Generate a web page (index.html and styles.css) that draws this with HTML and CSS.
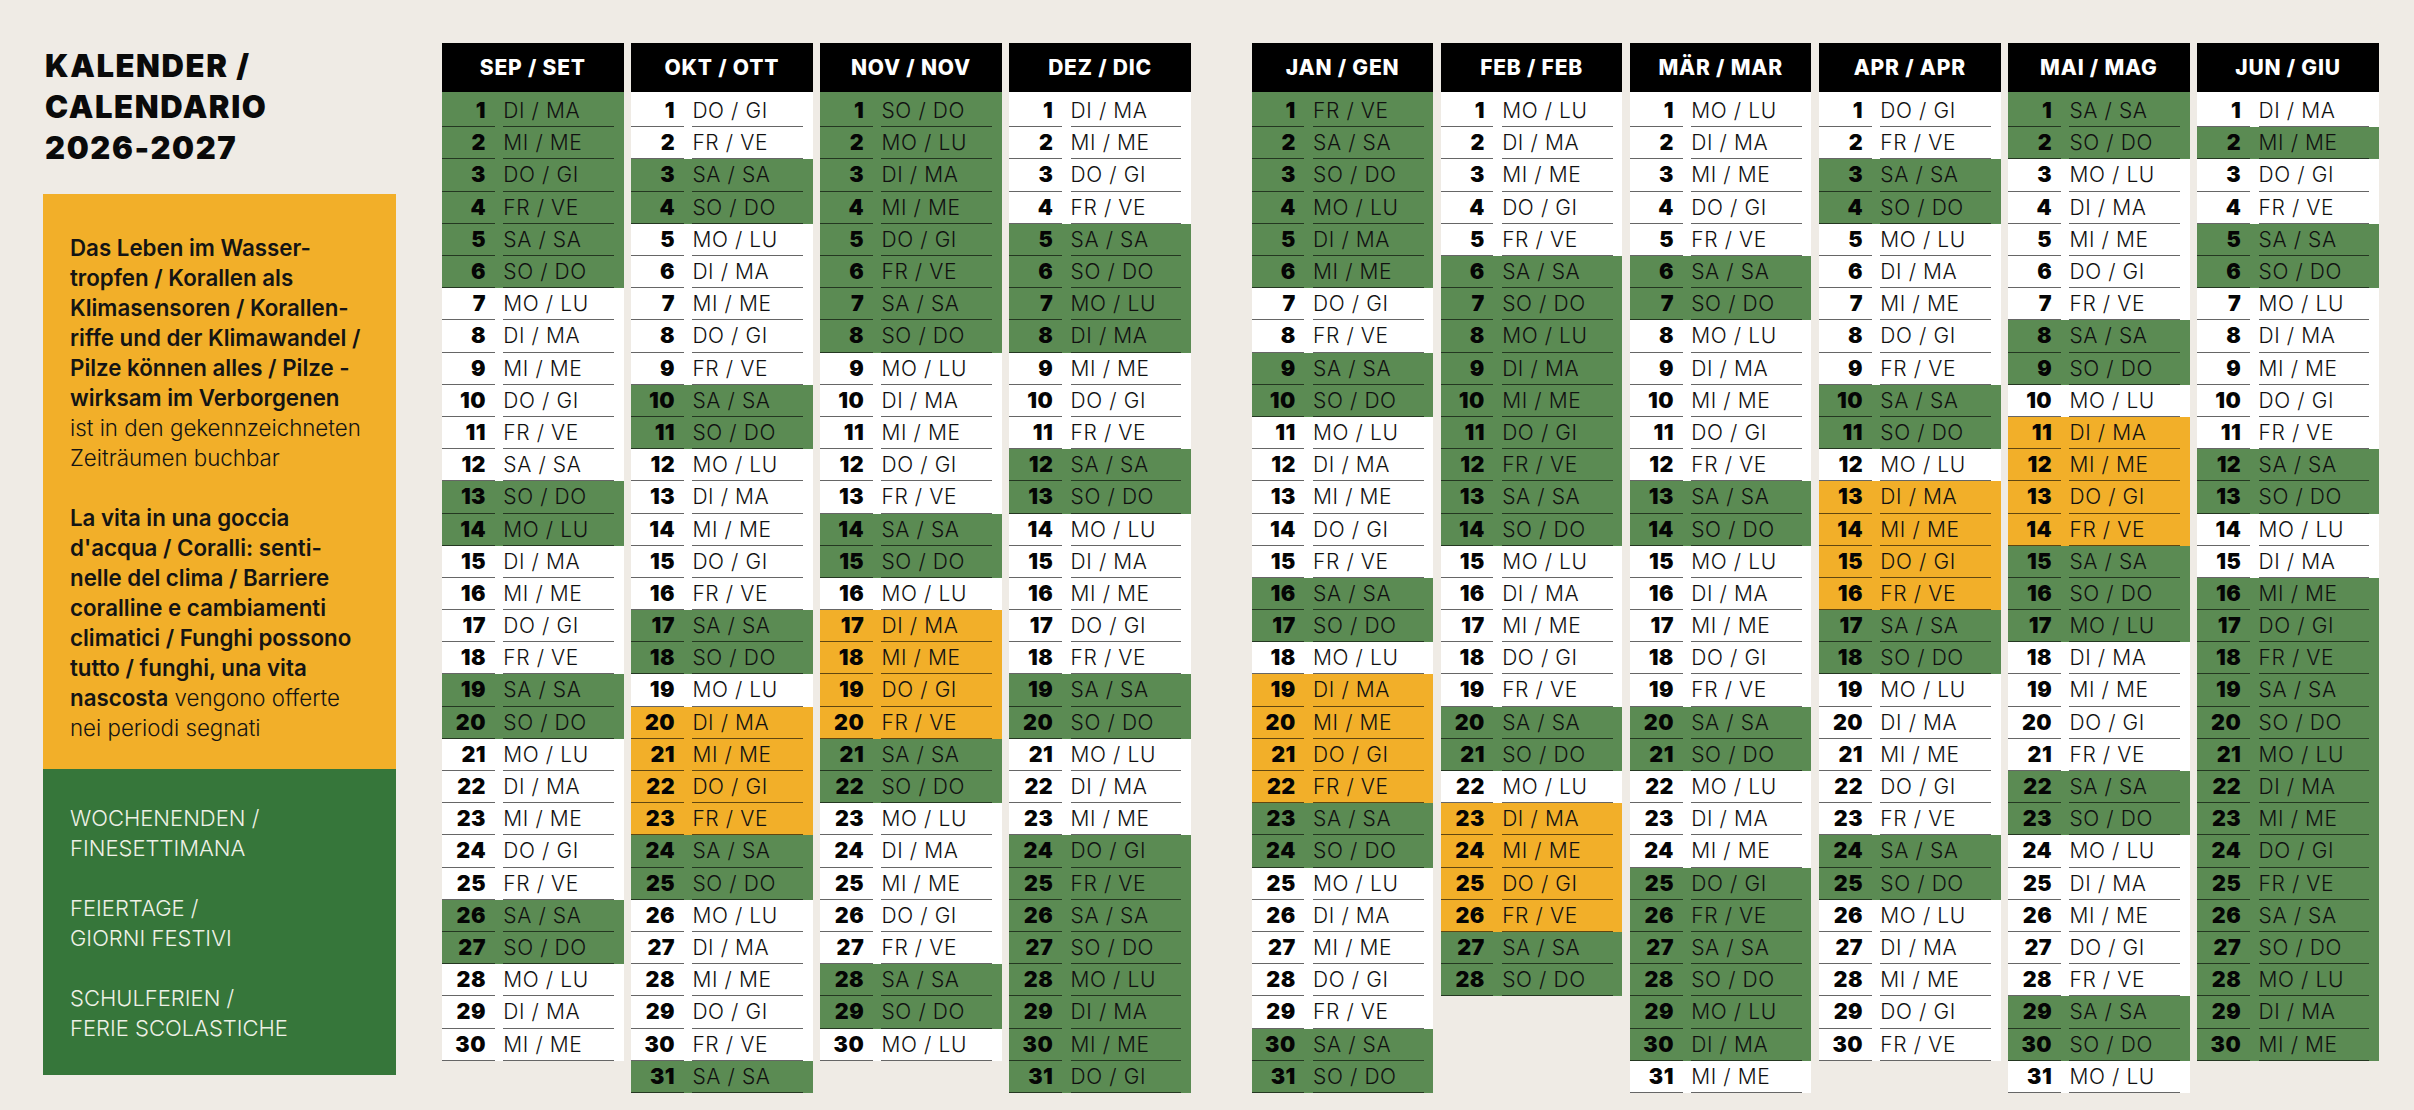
FILE: index.html
```html
<!DOCTYPE html>
<html lang="de">
<head>
<meta charset="utf-8">
<title>Kalender / Calendario 2026-2027</title>
<link rel="stylesheet" href="styles.css">
</head>
<body>
<div class="page">
  <aside class="side">
    <h1 class="title">KALENDER /<br>CALENDARIO<br>2026-2027</h1>
    <div class="info">
      <p><strong>Das Leben im Wasser-<br>tropfen / Korallen als<br>Klimasensoren / Korallen-<br>riffe und der Klimawandel /<br>Pilze können alles / Pilze -<br>wirksam im Verborgenen</strong><br>ist in den gekennzeichneten<br>Zeiträumen buchbar</p>
      <p><strong>La vita in una goccia<br>d'acqua / Coralli: senti-<br>nelle del clima / Barriere<br>coralline e cambiamenti<br>climatici / Funghi possono<br>tutto / funghi, una vita<br>nascosta</strong> vengono offerte<br>nei periodi segnati</p>
    </div>
    <div class="legend">
      <p>WOCHENENDEN /<br>FINESETTIMANA</p>
      <p>FEIERTAGE /<br>GIORNI FESTIVI</p>
      <p>SCHULFERIEN /<br>FERIE SCOLASTICHE</p>
    </div>
  </aside>

  <main class="cal">
    <div class="grp">
      <section class="month">
        <h2>SEP / SET</h2>
        <ul>
          <li class="g"><span class="n">1</span><span class="t">DI / MA</span></li>
          <li class="g"><span class="n">2</span><span class="t">MI / ME</span></li>
          <li class="g"><span class="n">3</span><span class="t">DO / GI</span></li>
          <li class="g"><span class="n">4</span><span class="t">FR / VE</span></li>
          <li class="g"><span class="n">5</span><span class="t">SA / SA</span></li>
          <li class="g"><span class="n">6</span><span class="t">SO / DO</span></li>
          <li><span class="n">7</span><span class="t">MO / LU</span></li>
          <li><span class="n">8</span><span class="t">DI / MA</span></li>
          <li><span class="n">9</span><span class="t">MI / ME</span></li>
          <li><span class="n">10</span><span class="t">DO / GI</span></li>
          <li><span class="n">11</span><span class="t">FR / VE</span></li>
          <li><span class="n">12</span><span class="t">SA / SA</span></li>
          <li class="g"><span class="n">13</span><span class="t">SO / DO</span></li>
          <li class="g"><span class="n">14</span><span class="t">MO / LU</span></li>
          <li><span class="n">15</span><span class="t">DI / MA</span></li>
          <li><span class="n">16</span><span class="t">MI / ME</span></li>
          <li><span class="n">17</span><span class="t">DO / GI</span></li>
          <li><span class="n">18</span><span class="t">FR / VE</span></li>
          <li class="g"><span class="n">19</span><span class="t">SA / SA</span></li>
          <li class="g"><span class="n">20</span><span class="t">SO / DO</span></li>
          <li><span class="n">21</span><span class="t">MO / LU</span></li>
          <li><span class="n">22</span><span class="t">DI / MA</span></li>
          <li><span class="n">23</span><span class="t">MI / ME</span></li>
          <li><span class="n">24</span><span class="t">DO / GI</span></li>
          <li><span class="n">25</span><span class="t">FR / VE</span></li>
          <li class="g"><span class="n">26</span><span class="t">SA / SA</span></li>
          <li class="g"><span class="n">27</span><span class="t">SO / DO</span></li>
          <li><span class="n">28</span><span class="t">MO / LU</span></li>
          <li><span class="n">29</span><span class="t">DI / MA</span></li>
          <li><span class="n">30</span><span class="t">MI / ME</span></li>
        </ul>
      </section>

      <section class="month">
        <h2>OKT / OTT</h2>
        <ul>
          <li><span class="n">1</span><span class="t">DO / GI</span></li>
          <li><span class="n">2</span><span class="t">FR / VE</span></li>
          <li class="g"><span class="n">3</span><span class="t">SA / SA</span></li>
          <li class="g"><span class="n">4</span><span class="t">SO / DO</span></li>
          <li><span class="n">5</span><span class="t">MO / LU</span></li>
          <li><span class="n">6</span><span class="t">DI / MA</span></li>
          <li><span class="n">7</span><span class="t">MI / ME</span></li>
          <li><span class="n">8</span><span class="t">DO / GI</span></li>
          <li><span class="n">9</span><span class="t">FR / VE</span></li>
          <li class="g"><span class="n">10</span><span class="t">SA / SA</span></li>
          <li class="g"><span class="n">11</span><span class="t">SO / DO</span></li>
          <li><span class="n">12</span><span class="t">MO / LU</span></li>
          <li><span class="n">13</span><span class="t">DI / MA</span></li>
          <li><span class="n">14</span><span class="t">MI / ME</span></li>
          <li><span class="n">15</span><span class="t">DO / GI</span></li>
          <li><span class="n">16</span><span class="t">FR / VE</span></li>
          <li class="g"><span class="n">17</span><span class="t">SA / SA</span></li>
          <li class="g"><span class="n">18</span><span class="t">SO / DO</span></li>
          <li><span class="n">19</span><span class="t">MO / LU</span></li>
          <li class="o"><span class="n">20</span><span class="t">DI / MA</span></li>
          <li class="o"><span class="n">21</span><span class="t">MI / ME</span></li>
          <li class="o"><span class="n">22</span><span class="t">DO / GI</span></li>
          <li class="o"><span class="n">23</span><span class="t">FR / VE</span></li>
          <li class="g"><span class="n">24</span><span class="t">SA / SA</span></li>
          <li class="g"><span class="n">25</span><span class="t">SO / DO</span></li>
          <li><span class="n">26</span><span class="t">MO / LU</span></li>
          <li><span class="n">27</span><span class="t">DI / MA</span></li>
          <li><span class="n">28</span><span class="t">MI / ME</span></li>
          <li><span class="n">29</span><span class="t">DO / GI</span></li>
          <li><span class="n">30</span><span class="t">FR / VE</span></li>
          <li class="g"><span class="n">31</span><span class="t">SA / SA</span></li>
        </ul>
      </section>

      <section class="month">
        <h2>NOV / NOV</h2>
        <ul>
          <li class="g"><span class="n">1</span><span class="t">SO / DO</span></li>
          <li class="g"><span class="n">2</span><span class="t">MO / LU</span></li>
          <li class="g"><span class="n">3</span><span class="t">DI / MA</span></li>
          <li class="g"><span class="n">4</span><span class="t">MI / ME</span></li>
          <li class="g"><span class="n">5</span><span class="t">DO / GI</span></li>
          <li class="g"><span class="n">6</span><span class="t">FR / VE</span></li>
          <li class="g"><span class="n">7</span><span class="t">SA / SA</span></li>
          <li class="g"><span class="n">8</span><span class="t">SO / DO</span></li>
          <li><span class="n">9</span><span class="t">MO / LU</span></li>
          <li><span class="n">10</span><span class="t">DI / MA</span></li>
          <li><span class="n">11</span><span class="t">MI / ME</span></li>
          <li><span class="n">12</span><span class="t">DO / GI</span></li>
          <li><span class="n">13</span><span class="t">FR / VE</span></li>
          <li class="g"><span class="n">14</span><span class="t">SA / SA</span></li>
          <li class="g"><span class="n">15</span><span class="t">SO / DO</span></li>
          <li><span class="n">16</span><span class="t">MO / LU</span></li>
          <li class="o"><span class="n">17</span><span class="t">DI / MA</span></li>
          <li class="o"><span class="n">18</span><span class="t">MI / ME</span></li>
          <li class="o"><span class="n">19</span><span class="t">DO / GI</span></li>
          <li class="o"><span class="n">20</span><span class="t">FR / VE</span></li>
          <li class="g"><span class="n">21</span><span class="t">SA / SA</span></li>
          <li class="g"><span class="n">22</span><span class="t">SO / DO</span></li>
          <li><span class="n">23</span><span class="t">MO / LU</span></li>
          <li><span class="n">24</span><span class="t">DI / MA</span></li>
          <li><span class="n">25</span><span class="t">MI / ME</span></li>
          <li><span class="n">26</span><span class="t">DO / GI</span></li>
          <li><span class="n">27</span><span class="t">FR / VE</span></li>
          <li class="g"><span class="n">28</span><span class="t">SA / SA</span></li>
          <li class="g"><span class="n">29</span><span class="t">SO / DO</span></li>
          <li><span class="n">30</span><span class="t">MO / LU</span></li>
        </ul>
      </section>

      <section class="month">
        <h2>DEZ / DIC</h2>
        <ul>
          <li><span class="n">1</span><span class="t">DI / MA</span></li>
          <li><span class="n">2</span><span class="t">MI / ME</span></li>
          <li><span class="n">3</span><span class="t">DO / GI</span></li>
          <li><span class="n">4</span><span class="t">FR / VE</span></li>
          <li class="g"><span class="n">5</span><span class="t">SA / SA</span></li>
          <li class="g"><span class="n">6</span><span class="t">SO / DO</span></li>
          <li class="g"><span class="n">7</span><span class="t">MO / LU</span></li>
          <li class="g"><span class="n">8</span><span class="t">DI / MA</span></li>
          <li><span class="n">9</span><span class="t">MI / ME</span></li>
          <li><span class="n">10</span><span class="t">DO / GI</span></li>
          <li><span class="n">11</span><span class="t">FR / VE</span></li>
          <li class="g"><span class="n">12</span><span class="t">SA / SA</span></li>
          <li class="g"><span class="n">13</span><span class="t">SO / DO</span></li>
          <li><span class="n">14</span><span class="t">MO / LU</span></li>
          <li><span class="n">15</span><span class="t">DI / MA</span></li>
          <li><span class="n">16</span><span class="t">MI / ME</span></li>
          <li><span class="n">17</span><span class="t">DO / GI</span></li>
          <li><span class="n">18</span><span class="t">FR / VE</span></li>
          <li class="g"><span class="n">19</span><span class="t">SA / SA</span></li>
          <li class="g"><span class="n">20</span><span class="t">SO / DO</span></li>
          <li><span class="n">21</span><span class="t">MO / LU</span></li>
          <li><span class="n">22</span><span class="t">DI / MA</span></li>
          <li><span class="n">23</span><span class="t">MI / ME</span></li>
          <li class="g"><span class="n">24</span><span class="t">DO / GI</span></li>
          <li class="g"><span class="n">25</span><span class="t">FR / VE</span></li>
          <li class="g"><span class="n">26</span><span class="t">SA / SA</span></li>
          <li class="g"><span class="n">27</span><span class="t">SO / DO</span></li>
          <li class="g"><span class="n">28</span><span class="t">MO / LU</span></li>
          <li class="g"><span class="n">29</span><span class="t">DI / MA</span></li>
          <li class="g"><span class="n">30</span><span class="t">MI / ME</span></li>
          <li class="g"><span class="n">31</span><span class="t">DO / GI</span></li>
        </ul>
      </section>
    </div>

    <div class="grp">
      <section class="month">
        <h2>JAN / GEN</h2>
        <ul>
          <li class="g"><span class="n">1</span><span class="t">FR / VE</span></li>
          <li class="g"><span class="n">2</span><span class="t">SA / SA</span></li>
          <li class="g"><span class="n">3</span><span class="t">SO / DO</span></li>
          <li class="g"><span class="n">4</span><span class="t">MO / LU</span></li>
          <li class="g"><span class="n">5</span><span class="t">DI / MA</span></li>
          <li class="g"><span class="n">6</span><span class="t">MI / ME</span></li>
          <li><span class="n">7</span><span class="t">DO / GI</span></li>
          <li><span class="n">8</span><span class="t">FR / VE</span></li>
          <li class="g"><span class="n">9</span><span class="t">SA / SA</span></li>
          <li class="g"><span class="n">10</span><span class="t">SO / DO</span></li>
          <li><span class="n">11</span><span class="t">MO / LU</span></li>
          <li><span class="n">12</span><span class="t">DI / MA</span></li>
          <li><span class="n">13</span><span class="t">MI / ME</span></li>
          <li><span class="n">14</span><span class="t">DO / GI</span></li>
          <li><span class="n">15</span><span class="t">FR / VE</span></li>
          <li class="g"><span class="n">16</span><span class="t">SA / SA</span></li>
          <li class="g"><span class="n">17</span><span class="t">SO / DO</span></li>
          <li><span class="n">18</span><span class="t">MO / LU</span></li>
          <li class="o"><span class="n">19</span><span class="t">DI / MA</span></li>
          <li class="o"><span class="n">20</span><span class="t">MI / ME</span></li>
          <li class="o"><span class="n">21</span><span class="t">DO / GI</span></li>
          <li class="o"><span class="n">22</span><span class="t">FR / VE</span></li>
          <li class="g"><span class="n">23</span><span class="t">SA / SA</span></li>
          <li class="g"><span class="n">24</span><span class="t">SO / DO</span></li>
          <li><span class="n">25</span><span class="t">MO / LU</span></li>
          <li><span class="n">26</span><span class="t">DI / MA</span></li>
          <li><span class="n">27</span><span class="t">MI / ME</span></li>
          <li><span class="n">28</span><span class="t">DO / GI</span></li>
          <li><span class="n">29</span><span class="t">FR / VE</span></li>
          <li class="g"><span class="n">30</span><span class="t">SA / SA</span></li>
          <li class="g"><span class="n">31</span><span class="t">SO / DO</span></li>
        </ul>
      </section>

      <section class="month">
        <h2>FEB / FEB</h2>
        <ul>
          <li><span class="n">1</span><span class="t">MO / LU</span></li>
          <li><span class="n">2</span><span class="t">DI / MA</span></li>
          <li><span class="n">3</span><span class="t">MI / ME</span></li>
          <li><span class="n">4</span><span class="t">DO / GI</span></li>
          <li><span class="n">5</span><span class="t">FR / VE</span></li>
          <li class="g"><span class="n">6</span><span class="t">SA / SA</span></li>
          <li class="g"><span class="n">7</span><span class="t">SO / DO</span></li>
          <li class="g"><span class="n">8</span><span class="t">MO / LU</span></li>
          <li class="g"><span class="n">9</span><span class="t">DI / MA</span></li>
          <li class="g"><span class="n">10</span><span class="t">MI / ME</span></li>
          <li class="g"><span class="n">11</span><span class="t">DO / GI</span></li>
          <li class="g"><span class="n">12</span><span class="t">FR / VE</span></li>
          <li class="g"><span class="n">13</span><span class="t">SA / SA</span></li>
          <li class="g"><span class="n">14</span><span class="t">SO / DO</span></li>
          <li><span class="n">15</span><span class="t">MO / LU</span></li>
          <li><span class="n">16</span><span class="t">DI / MA</span></li>
          <li><span class="n">17</span><span class="t">MI / ME</span></li>
          <li><span class="n">18</span><span class="t">DO / GI</span></li>
          <li><span class="n">19</span><span class="t">FR / VE</span></li>
          <li class="g"><span class="n">20</span><span class="t">SA / SA</span></li>
          <li class="g"><span class="n">21</span><span class="t">SO / DO</span></li>
          <li><span class="n">22</span><span class="t">MO / LU</span></li>
          <li class="o"><span class="n">23</span><span class="t">DI / MA</span></li>
          <li class="o"><span class="n">24</span><span class="t">MI / ME</span></li>
          <li class="o"><span class="n">25</span><span class="t">DO / GI</span></li>
          <li class="o"><span class="n">26</span><span class="t">FR / VE</span></li>
          <li class="g"><span class="n">27</span><span class="t">SA / SA</span></li>
          <li class="g"><span class="n">28</span><span class="t">SO / DO</span></li>
        </ul>
      </section>

      <section class="month">
        <h2>MÄR / MAR</h2>
        <ul>
          <li><span class="n">1</span><span class="t">MO / LU</span></li>
          <li><span class="n">2</span><span class="t">DI / MA</span></li>
          <li><span class="n">3</span><span class="t">MI / ME</span></li>
          <li><span class="n">4</span><span class="t">DO / GI</span></li>
          <li><span class="n">5</span><span class="t">FR / VE</span></li>
          <li class="g"><span class="n">6</span><span class="t">SA / SA</span></li>
          <li class="g"><span class="n">7</span><span class="t">SO / DO</span></li>
          <li><span class="n">8</span><span class="t">MO / LU</span></li>
          <li><span class="n">9</span><span class="t">DI / MA</span></li>
          <li><span class="n">10</span><span class="t">MI / ME</span></li>
          <li><span class="n">11</span><span class="t">DO / GI</span></li>
          <li><span class="n">12</span><span class="t">FR / VE</span></li>
          <li class="g"><span class="n">13</span><span class="t">SA / SA</span></li>
          <li class="g"><span class="n">14</span><span class="t">SO / DO</span></li>
          <li><span class="n">15</span><span class="t">MO / LU</span></li>
          <li><span class="n">16</span><span class="t">DI / MA</span></li>
          <li><span class="n">17</span><span class="t">MI / ME</span></li>
          <li><span class="n">18</span><span class="t">DO / GI</span></li>
          <li><span class="n">19</span><span class="t">FR / VE</span></li>
          <li class="g"><span class="n">20</span><span class="t">SA / SA</span></li>
          <li class="g"><span class="n">21</span><span class="t">SO / DO</span></li>
          <li><span class="n">22</span><span class="t">MO / LU</span></li>
          <li><span class="n">23</span><span class="t">DI / MA</span></li>
          <li><span class="n">24</span><span class="t">MI / ME</span></li>
          <li class="g"><span class="n">25</span><span class="t">DO / GI</span></li>
          <li class="g"><span class="n">26</span><span class="t">FR / VE</span></li>
          <li class="g"><span class="n">27</span><span class="t">SA / SA</span></li>
          <li class="g"><span class="n">28</span><span class="t">SO / DO</span></li>
          <li class="g"><span class="n">29</span><span class="t">MO / LU</span></li>
          <li class="g"><span class="n">30</span><span class="t">DI / MA</span></li>
          <li><span class="n">31</span><span class="t">MI / ME</span></li>
        </ul>
      </section>

      <section class="month">
        <h2>APR / APR</h2>
        <ul>
          <li><span class="n">1</span><span class="t">DO / GI</span></li>
          <li><span class="n">2</span><span class="t">FR / VE</span></li>
          <li class="g"><span class="n">3</span><span class="t">SA / SA</span></li>
          <li class="g"><span class="n">4</span><span class="t">SO / DO</span></li>
          <li><span class="n">5</span><span class="t">MO / LU</span></li>
          <li><span class="n">6</span><span class="t">DI / MA</span></li>
          <li><span class="n">7</span><span class="t">MI / ME</span></li>
          <li><span class="n">8</span><span class="t">DO / GI</span></li>
          <li><span class="n">9</span><span class="t">FR / VE</span></li>
          <li class="g"><span class="n">10</span><span class="t">SA / SA</span></li>
          <li class="g"><span class="n">11</span><span class="t">SO / DO</span></li>
          <li><span class="n">12</span><span class="t">MO / LU</span></li>
          <li class="o"><span class="n">13</span><span class="t">DI / MA</span></li>
          <li class="o"><span class="n">14</span><span class="t">MI / ME</span></li>
          <li class="o"><span class="n">15</span><span class="t">DO / GI</span></li>
          <li class="o"><span class="n">16</span><span class="t">FR / VE</span></li>
          <li class="g"><span class="n">17</span><span class="t">SA / SA</span></li>
          <li class="g"><span class="n">18</span><span class="t">SO / DO</span></li>
          <li><span class="n">19</span><span class="t">MO / LU</span></li>
          <li><span class="n">20</span><span class="t">DI / MA</span></li>
          <li><span class="n">21</span><span class="t">MI / ME</span></li>
          <li><span class="n">22</span><span class="t">DO / GI</span></li>
          <li><span class="n">23</span><span class="t">FR / VE</span></li>
          <li class="g"><span class="n">24</span><span class="t">SA / SA</span></li>
          <li class="g"><span class="n">25</span><span class="t">SO / DO</span></li>
          <li><span class="n">26</span><span class="t">MO / LU</span></li>
          <li><span class="n">27</span><span class="t">DI / MA</span></li>
          <li><span class="n">28</span><span class="t">MI / ME</span></li>
          <li><span class="n">29</span><span class="t">DO / GI</span></li>
          <li><span class="n">30</span><span class="t">FR / VE</span></li>
        </ul>
      </section>

      <section class="month">
        <h2>MAI / MAG</h2>
        <ul>
          <li class="g"><span class="n">1</span><span class="t">SA / SA</span></li>
          <li class="g"><span class="n">2</span><span class="t">SO / DO</span></li>
          <li><span class="n">3</span><span class="t">MO / LU</span></li>
          <li><span class="n">4</span><span class="t">DI / MA</span></li>
          <li><span class="n">5</span><span class="t">MI / ME</span></li>
          <li><span class="n">6</span><span class="t">DO / GI</span></li>
          <li><span class="n">7</span><span class="t">FR / VE</span></li>
          <li class="g"><span class="n">8</span><span class="t">SA / SA</span></li>
          <li class="g"><span class="n">9</span><span class="t">SO / DO</span></li>
          <li><span class="n">10</span><span class="t">MO / LU</span></li>
          <li class="o"><span class="n">11</span><span class="t">DI / MA</span></li>
          <li class="o"><span class="n">12</span><span class="t">MI / ME</span></li>
          <li class="o"><span class="n">13</span><span class="t">DO / GI</span></li>
          <li class="o"><span class="n">14</span><span class="t">FR / VE</span></li>
          <li class="g"><span class="n">15</span><span class="t">SA / SA</span></li>
          <li class="g"><span class="n">16</span><span class="t">SO / DO</span></li>
          <li class="g"><span class="n">17</span><span class="t">MO / LU</span></li>
          <li><span class="n">18</span><span class="t">DI / MA</span></li>
          <li><span class="n">19</span><span class="t">MI / ME</span></li>
          <li><span class="n">20</span><span class="t">DO / GI</span></li>
          <li><span class="n">21</span><span class="t">FR / VE</span></li>
          <li class="g"><span class="n">22</span><span class="t">SA / SA</span></li>
          <li class="g"><span class="n">23</span><span class="t">SO / DO</span></li>
          <li><span class="n">24</span><span class="t">MO / LU</span></li>
          <li><span class="n">25</span><span class="t">DI / MA</span></li>
          <li><span class="n">26</span><span class="t">MI / ME</span></li>
          <li><span class="n">27</span><span class="t">DO / GI</span></li>
          <li><span class="n">28</span><span class="t">FR / VE</span></li>
          <li class="g"><span class="n">29</span><span class="t">SA / SA</span></li>
          <li class="g"><span class="n">30</span><span class="t">SO / DO</span></li>
          <li><span class="n">31</span><span class="t">MO / LU</span></li>
        </ul>
      </section>

      <section class="month">
        <h2>JUN / GIU</h2>
        <ul>
          <li><span class="n">1</span><span class="t">DI / MA</span></li>
          <li class="g"><span class="n">2</span><span class="t">MI / ME</span></li>
          <li><span class="n">3</span><span class="t">DO / GI</span></li>
          <li><span class="n">4</span><span class="t">FR / VE</span></li>
          <li class="g"><span class="n">5</span><span class="t">SA / SA</span></li>
          <li class="g"><span class="n">6</span><span class="t">SO / DO</span></li>
          <li><span class="n">7</span><span class="t">MO / LU</span></li>
          <li><span class="n">8</span><span class="t">DI / MA</span></li>
          <li><span class="n">9</span><span class="t">MI / ME</span></li>
          <li><span class="n">10</span><span class="t">DO / GI</span></li>
          <li><span class="n">11</span><span class="t">FR / VE</span></li>
          <li class="g"><span class="n">12</span><span class="t">SA / SA</span></li>
          <li class="g"><span class="n">13</span><span class="t">SO / DO</span></li>
          <li><span class="n">14</span><span class="t">MO / LU</span></li>
          <li><span class="n">15</span><span class="t">DI / MA</span></li>
          <li class="g"><span class="n">16</span><span class="t">MI / ME</span></li>
          <li class="g"><span class="n">17</span><span class="t">DO / GI</span></li>
          <li class="g"><span class="n">18</span><span class="t">FR / VE</span></li>
          <li class="g"><span class="n">19</span><span class="t">SA / SA</span></li>
          <li class="g"><span class="n">20</span><span class="t">SO / DO</span></li>
          <li class="g"><span class="n">21</span><span class="t">MO / LU</span></li>
          <li class="g"><span class="n">22</span><span class="t">DI / MA</span></li>
          <li class="g"><span class="n">23</span><span class="t">MI / ME</span></li>
          <li class="g"><span class="n">24</span><span class="t">DO / GI</span></li>
          <li class="g"><span class="n">25</span><span class="t">FR / VE</span></li>
          <li class="g"><span class="n">26</span><span class="t">SA / SA</span></li>
          <li class="g"><span class="n">27</span><span class="t">SO / DO</span></li>
          <li class="g"><span class="n">28</span><span class="t">MO / LU</span></li>
          <li class="g"><span class="n">29</span><span class="t">DI / MA</span></li>
          <li class="g"><span class="n">30</span><span class="t">MI / ME</span></li>
        </ul>
      </section>
    </div>
  </main>
</div>
</body>
</html>
```

FILE: styles.css
```css
* {
  box-sizing: border-box;
  margin: 0;
  padding: 0;
}

html,
body {
  background: #efebe5;
}

body {
  width: 2414px;
  height: 1110px;
  overflow: hidden;
  font-family: Inter, "Liberation Sans", sans-serif;
  color: #111;
}

.page {
  display: flex;
  align-items: flex-start;
  padding: 43px 0 0 43px;
}

/* ---------- sidebar ---------- */

.side {
  flex: none;
  width: 353px;
  margin-right: 46px;
}

.title {
  height: 151px;
  padding: 2px 0 0 2px;
  font-size: 31px;
  line-height: 41px;
  font-weight: 900;
  letter-spacing: 1.6px;
  color: #0a0a0a;
}

.info {
  background: #f2af29;
  padding: 39px 8px 26px 27px;
  font-size: 22.3px;
  line-height: 30px;
  font-weight: 300;
  color: #141414;
  white-space: nowrap;
}

.info strong {
  font-weight: 600;
}

.info p + p {
  margin-top: 30px;
}

.legend {
  background: #36763a;
  color: #eef1e6;
  padding: 34px 8px 32px 27px;
  font-size: 22px;
  line-height: 30px;
  font-weight: 300;
  white-space: nowrap;
}

.legend p + p {
  margin-top: 30px;
}

/* ---------- calendar ---------- */

.cal {
  display: flex;
  gap: 61px;
}

.grp {
  display: flex;
  gap: 7.6px;
}

.month {
  width: 181.5px;
}

.month h2 {
  height: 49px;
  background: #000;
  color: #fff;
  text-align: center;
  font-size: 21px;
  line-height: 49px;
  font-weight: 800;
  letter-spacing: 0.8px;
}

.month ul {
  list-style: none;
}

.month li {
  display: flex;
  height: 32.2px;
  background: #fff;
}

.month li:first-child {
  height: 35.3px;
  padding-top: 3.1px;
}

.month li.g {
  background: #5b8b53;
}

.month li.o {
  background: #f2af29;
}

.n {
  flex: none;
  width: 52.6px;
  margin-right: 8.7px;
  padding-right: 8.6px;
  text-align: right;
  font-size: 21.5px;
  line-height: 31px;
  font-weight: 900;
  letter-spacing: 0.5px;
  color: #050505;
  border-bottom: 1.5px solid rgba(0, 0, 0, 0.6);
}

.t {
  flex: none;
  width: 110.7px;
  font-size: 21px;
  line-height: 31px;
  font-weight: 300;
  letter-spacing: 0.6px;
  white-space: nowrap;
  color: #111;
  border-bottom: 1.5px solid rgba(0, 0, 0, 0.6);
}
```
